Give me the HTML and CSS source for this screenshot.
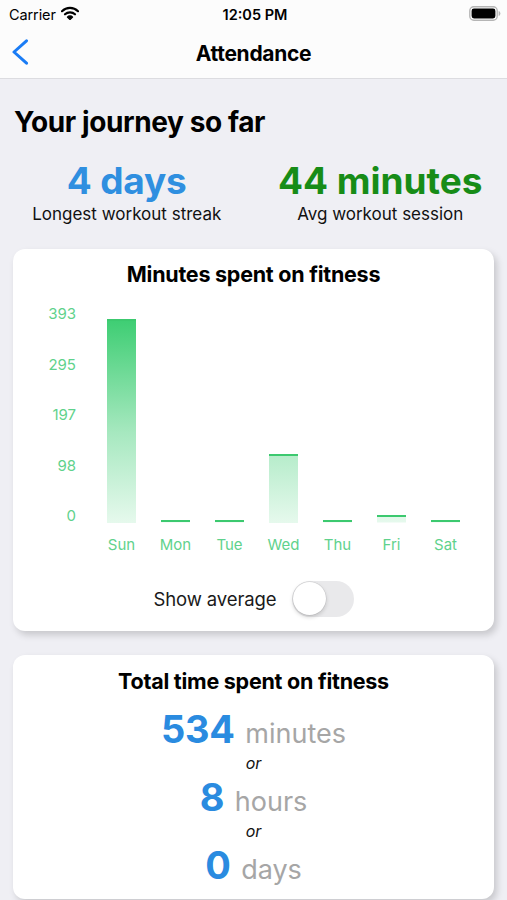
FILE: index.html
```html
<!DOCTYPE html>
<html>
<head>
<meta charset="utf-8">
<link rel="stylesheet" href="styles.css">
</head>
<body>
<header class="top">
  <div class="status">
    <div class="status-left">
      <span class="carrier">Carrier</span>
      <svg class="wifi" width="18" height="14" viewBox="0 0 18 14">
        <path d="M1 5.2 A11.5 11.5 0 0 1 17 5.2" fill="none" stroke="#000" stroke-width="2.2" stroke-linecap="round"/>
        <path d="M4 8.3 A7.2 7.2 0 0 1 14 8.3" fill="none" stroke="#000" stroke-width="2.2" stroke-linecap="round"/>
        <path d="M6.4 11.1 A3.4 3.4 0 0 1 11.6 11.1 L9 13.6 Z" fill="#000" stroke="#000" stroke-width="1.2" stroke-linejoin="round"/>
      </svg>
    </div>
    <div class="time">12:05 PM</div>
    <div class="status-right">
      <svg class="battery" width="32" height="15" viewBox="0 0 32 15">
        <rect x="0.8" y="0.8" width="27.4" height="13.4" rx="4" fill="none" stroke="#b5b5b5" stroke-width="1.4"/>
        <rect x="2.6" y="2.6" width="23.8" height="9.8" rx="2.4" fill="#000"/>
        <path d="M29.6 5 Q31.4 5.4 31.4 7.5 Q31.4 9.6 29.6 10 Z" fill="#b5b5b5"/>
      </svg>
    </div>
  </div>
  <nav class="nav">
    <svg class="back" width="18" height="26" viewBox="0 0 18 26">
      <polyline points="15.5,1.8 3,13 15.5,24.2" fill="none" stroke="#1a7cf5" stroke-width="3" stroke-linecap="round" stroke-linejoin="round"/>
    </svg>
    <div class="nav-title">Attendance</div>
    <div></div>
  </nav>
</header>

<main class="content">
  <h1 class="journey">Your journey so far</h1>
  <section class="stats">
    <div class="stat">
      <div class="stat-value blue">4 days</div>
      <div class="stat-label">Longest workout streak</div>
    </div>
    <div class="stat">
      <div class="stat-value green">44 minutes</div>
      <div class="stat-label">Avg workout session</div>
    </div>
  </section>

  <section class="card chart-card">
    <h2 class="card-title">Minutes spent on fitness</h2>
    <div class="chart">
      <div class="axis">
        <span>393</span>
        <span>295</span>
        <span>197</span>
        <span>98</span>
        <span>0</span>
      </div>
      <div class="plot">
        <div class="bars">
          <div class="col"><div class="bar" style="height:204px"></div></div>
          <div class="col"><div class="bar" style="height:2.5px"></div></div>
          <div class="col"><div class="bar" style="height:2.5px"></div></div>
          <div class="col"><div class="bar" style="height:69px"></div></div>
          <div class="col"><div class="bar" style="height:2.5px"></div></div>
          <div class="col"><div class="bar" style="height:7.5px"></div></div>
          <div class="col"><div class="bar" style="height:2.5px"></div></div>
        </div>
        <div class="days">
          <span>Sun</span><span>Mon</span><span>Tue</span><span>Wed</span><span>Thu</span><span>Fri</span><span>Sat</span>
        </div>
      </div>
    </div>
    <div class="toggle-row">
      <span class="toggle-label">Show average</span>
      <span class="toggle"><span class="knob"></span></span>
    </div>
  </section>

  <section class="card total-card">
    <h2 class="card-title">Total time spent on fitness</h2>
    <div class="total-line"><span class="num">534</span> <span class="unit">minutes</span></div>
    <div class="or">or</div>
    <div class="total-line"><span class="num">8</span> <span class="unit">hours</span></div>
    <div class="or">or</div>
    <div class="total-line"><span class="num">0</span> <span class="unit">days</span></div>
  </section>
</main>
</body>
</html>
```

FILE: styles.css
```css
* { box-sizing: border-box; }

html, body {
  margin: 0;
  padding: 0;
}

body {
  width: 507px;
  height: 900px;
  overflow: hidden;
  background: #efeff4;
  font-family: "Inter", "Liberation Sans", sans-serif;
  color: #000;
}

.top {
  background: #fcfcfc;
  border-bottom: 1px solid #dcdce0;
}

.status {
  height: 28px;
  display: grid;
  grid-template-columns: 1fr auto 1fr;
  align-items: center;
  padding: 0 6px 0 9px;
}

.status-left {
  display: flex;
  align-items: center;
  gap: 5px;
}

.carrier {
  font-size: 14.5px;
  letter-spacing: -0.1px;
}

.wifi { display: block; margin-top: -2px; }

.time {
  font-size: 14.5px;
  font-weight: 600;
}

.status-right {
  display: flex;
  justify-content: flex-end;
}

.battery { display: block; margin-top: -2px; }

.nav {
  height: 50px;
  display: grid;
  grid-template-columns: 1fr auto 1fr;
  align-items: center;
  padding: 0 11px;
}

.back { display: block; margin-top: -2px; }

.nav-title {
  font-size: 21px;
  font-weight: 700;
  letter-spacing: -0.3px;
}

.content {
  padding-top: 26px;
}

.journey {
  margin: 0;
  padding-left: 14px;
  font-size: 28px;
  line-height: 34px;
  font-weight: 700;
  letter-spacing: -0.4px;
}

.stats {
  display: grid;
  grid-template-columns: 1fr 1fr;
  margin-top: 20px;
  text-align: center;
}

.stat-value {
  font-size: 37px;
  line-height: 44px;
  font-weight: 700;
  letter-spacing: -0.2px;
}

.blue { color: #2f8fe0; }
.green { color: #178c17; }

.green { letter-spacing: 0; }

.stat-label {
  font-size: 17px;
  line-height: 22px;
  color: #111;
}

.card {
  margin: 24px 13px 0;
  background: #fff;
  border-radius: 12px;
  box-shadow: 3px 4px 7px rgba(0, 0, 0, 0.17);
}

.chart-card {
  padding: 12px 0 14px;
}

.card-title {
  margin: 0;
  text-align: center;
  font-size: 21.5px;
  line-height: 26px;
  font-weight: 700;
  letter-spacing: -0.25px;
}

.chart {
  display: flex;
  align-items: flex-start;
  margin-top: 18px;
  padding-left: 23px;
}

.axis {
  width: 40px;
  height: 220px;
  display: flex;
  flex-direction: column;
  justify-content: space-between;
  text-align: right;
  font-size: 15px;
  line-height: 18px;
  color: #5fd28c;
}

.plot {
  width: 378px;
  margin-left: 18.5px;
}

.bars {
  height: 217.5px;
  display: flex;
  align-items: flex-end;
}

.col {
  flex: 1;
  display: flex;
  justify-content: center;
  align-items: flex-end;
  height: 100%;
}

.bar {
  width: 29px;
  border-top: 2.5px solid #3cc96f;
  background-image: linear-gradient(to bottom, #3fce74 0%, #a6e8bf 55%, #e6f9ed 100%);
  background-size: 100% 202px;
  background-position: left bottom;
  background-repeat: no-repeat;
}

.days {
  display: flex;
  margin-top: 13px;
  font-size: 15px;
  line-height: 18px;
  color: #5fd28c;
}

.days span {
  flex: 1;
  text-align: center;
}

.toggle-row {
  margin-top: 27px;
  height: 36px;
  display: flex;
  justify-content: center;
  align-items: center;
  gap: 15px;
}

.toggle-label {
  font-size: 18.5px;
  color: #1a1a1a;
  letter-spacing: -0.1px;
}

.toggle {
  width: 62px;
  height: 36px;
  border-radius: 18px;
  background: #e9e9eb;
  display: flex;
  align-items: center;
  padding: 1.5px;
}

.knob {
  width: 33px;
  height: 33px;
  border-radius: 50%;
  background: #fff;
  box-shadow: 0 2px 4px rgba(0, 0, 0, 0.18), 0 0 0 0.5px rgba(0, 0, 0, 0.1);
}

.total-card {
  padding: 13px 0 11px;
}

.total-line {
  text-align: center;
  font-size: 38px;
  line-height: 46px;
}

.total-card .card-title + .total-line {
  margin-top: 12.5px;
}

.num {
  font-weight: 700;
  color: #2a8be0;
  letter-spacing: -0.3px;
}

.unit {
  font-size: 27px;
  line-height: 1;
  color: #a6a6a6;
}

.or {
  text-align: center;
  font-size: 16px;
  line-height: 22px;
  font-style: italic;
  color: #111;
}
```
